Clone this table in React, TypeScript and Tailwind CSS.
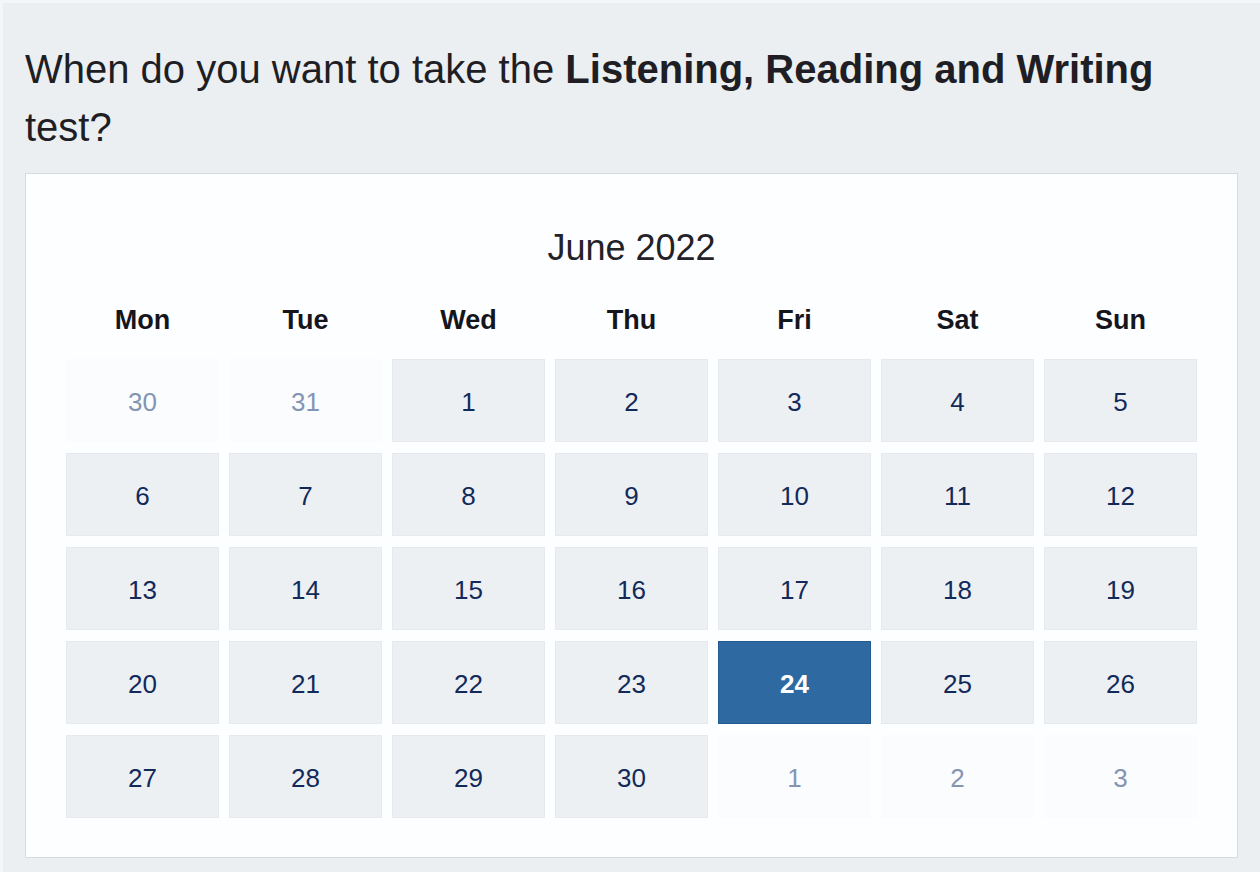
import React from 'react';

type Day = { n: number; inMonth: boolean };

const weekdays = ['Mon', 'Tue', 'Wed', 'Thu', 'Fri', 'Sat', 'Sun'];

function buildDays(): Day[] {
  const days: Day[] = [{ n: 30, inMonth: false }, { n: 31, inMonth: false }];
  for (let i = 1; i <= 30; i++) days.push({ n: i, inMonth: true });
  for (let i = 1; i <= 3; i++) days.push({ n: i, inMonth: false });
  return days;
}

export default function App() {
  const days = buildDays();
  const selected = 24;

  return (
    <div
      className="min-h-[872px] bg-[#eceff2] pl-[25px] pr-[22px] pt-[40px] pb-[14px] shadow-[inset_3px_3px_0_#f4f6f8]"
      style={{ fontFamily: '"Liberation Sans", Arial, sans-serif' }}
    >
      <h1 className="max-w-[1150px] text-[40px] leading-[58px] text-[#1e1e24] font-normal">
        When do you want to take the <span className="font-bold">Listening, Reading and Writing</span> test?
      </h1>

      <div className="mt-[17px] bg-[#fdfeff] border border-[#d6dbe1] px-[40px] pt-[52px] pb-[39px]">
        <div className="text-center text-[36px] leading-[44px] text-[#222228]">June 2022</div>

        <div className="mt-[34px] grid grid-cols-7 gap-x-[10px]">
          {weekdays.map((d) => (
            <div key={d} className="text-center text-[27px] leading-[32px] font-bold text-[#15151c]">
              {d}
            </div>
          ))}
        </div>

        <div className="mt-[23px] grid grid-cols-7 gap-x-[10px] gap-y-[11px]">
          {days.map((d, i) => {
            if (!d.inMonth) {
              return (
                <div
                  key={i}
                  className="h-[83px] pt-[3px] flex items-center justify-center bg-[#fbfcfe] text-[26px] text-[#8495b4]"
                >
                  {d.n}
                </div>
              );
            }
            if (d.n === selected) {
              return (
                <div
                  key={i}
                  className="h-[83px] pt-[3px] flex items-center justify-center bg-[#2e6aa1] border border-[#235b8f] text-[26px] font-bold text-white"
                >
                  {d.n}
                </div>
              );
            }
            return (
              <div
                key={i}
                className="h-[83px] pt-[3px] flex items-center justify-center bg-[#edf0f3] border border-[#e6eaee] text-[26px] text-[#122a5a]"
              >
                {d.n}
              </div>
            );
          })}
        </div>
      </div>
    </div>
  );
}
